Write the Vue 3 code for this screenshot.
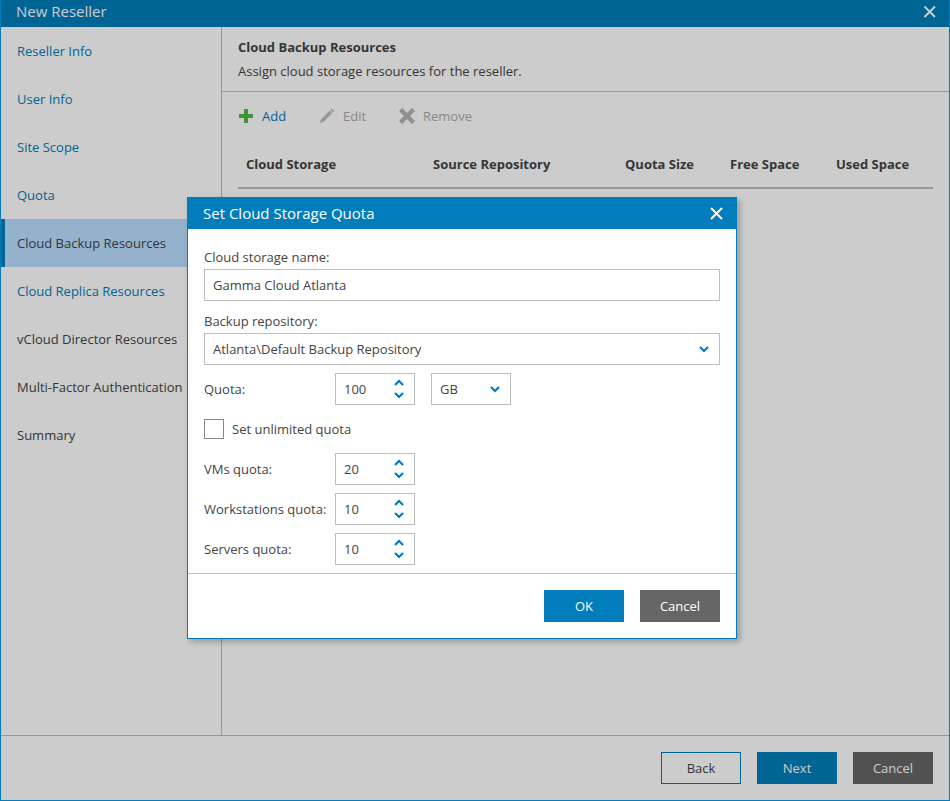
<script setup>
const steps = ['Reseller Info','User Info','Site Scope','Quota','Cloud Backup Resources','Cloud Replica Resources','vCloud Director Resources','Multi-Factor Authentication','Summary']
const active = 4
const dark = new Set([4,6,7,8])
const cols = [
  { t:'Cloud Storage', w:187 }, { t:'Source Repository', w:192 }, { t:'Quota Size', w:105 }, { t:'Free Space', w:106 }, { t:'Used Space', w:97 }
]
const counts = [ ['VMs quota:','20'], ['Workstations quota:','10'], ['Servers quota:','10'] ]
</script>

<template>
  <div class="win">
    <header class="win-head">
      <span class="win-title">New Reseller</span>
      <svg class="x" width="14" height="14" viewBox="0 0 14 14"><path d="M2.5 1.5l10.5 10.5M13 1.5L2.5 12" stroke="#fff" stroke-width="2" fill="none"/></svg>
    </header>
    <div class="win-main">
      <nav class="side">
        <div v-for="(s,i) in steps" :key="s" class="step" :class="{ on: i===active, dk: dark.has(i) }">{{ s }}</div>
      </nav>
      <section class="content">
        <div class="intro">
          <div class="intro-title">Cloud Backup Resources</div>
          <div class="intro-sub">Assign cloud storage resources for the reseller.</div>
        </div>
        <div class="tools">
          <span class="tool t-add">
            <svg width="14" height="14" viewBox="0 0 14 14"><path d="M5 0h4v5h5v4H9v5H5V9H0V5h5z" fill="#4fb848"/></svg>Add
          </span>
          <span class="tool t-edit">
            <svg width="16" height="16" viewBox="0 0 16 16"><path d="M12.7 0.5l2.5 2.5-1.3 1.3-2.5-2.5zM10.7 2.5l2.5 2.5L4 14.3 1 15l.7-3z" fill="#bbb"/></svg>Edit
          </span>
          <span class="tool t-rem">
            <svg width="16" height="16" viewBox="0 0 16 16"><path d="M1.5 1.5l13 13M14.5 1.5l-13 13" stroke="#b5b5b5" stroke-width="4.4" fill="none"/></svg>Remove
          </span>
        </div>
        <div class="thead">
          <span v-for="c in cols" :key="c.t" class="th" :style="{ width: c.w + 'px' }">{{ c.t }}</span>
        </div>
      </section>
    </div>
    <footer class="win-foot">
      <button class="btn b-back">Back</button>
      <button class="btn b-pri">Next</button>
      <button class="btn b-sec">Cancel</button>
    </footer>

    <div class="shade"></div>

    <div class="dlg">
      <header class="dlg-head">
        <span class="dlg-title">Set Cloud Storage Quota</span>
        <svg width="13" height="13" viewBox="0 0 13 13"><path d="M1 1l11 11M12 1L1 12" stroke="#fff" stroke-width="2" fill="none"/></svg>
      </header>
      <div class="dlg-body">
        <label class="lbl l1">Cloud storage name:</label>
        <div class="field">Gamma Cloud Atlanta</div>
        <label class="lbl l2">Backup repository:</label>
        <div class="field sel">
          Atlanta\Default Backup Repository
          <svg class="chev" width="10" height="7" viewBox="0 0 10 7"><path d="M1 1l4 4 4-4" stroke="#007dba" stroke-width="2.2" fill="none"/></svg>
        </div>
        <div class="row r-quota">
          <span class="rl">Quota:</span>
          <div class="spin"><span>100</span>
            <span class="arrows">
              <svg width="10" height="7" viewBox="0 0 10 7"><path d="M1 6l4-4 4 4" stroke="#007dba" stroke-width="2.2" fill="none"/></svg>
              <svg width="10" height="7" viewBox="0 0 10 7"><path d="M1 1l4 4 4-4" stroke="#007dba" stroke-width="2.2" fill="none"/></svg>
            </span>
          </div>
          <div class="unit">GB
            <svg width="10" height="7" viewBox="0 0 10 7"><path d="M1 1l4 4 4-4" stroke="#007dba" stroke-width="2.2" fill="none"/></svg>
          </div>
        </div>
        <div class="check"><span class="box"></span>Set unlimited quota</div>
        <div v-for="c in counts" :key="c[0]" class="row r-count">
          <span class="rl">{{ c[0] }}</span>
          <div class="spin"><span>{{ c[1] }}</span>
            <span class="arrows">
              <svg width="10" height="7" viewBox="0 0 10 7"><path d="M1 6l4-4 4 4" stroke="#007dba" stroke-width="2.2" fill="none"/></svg>
              <svg width="10" height="7" viewBox="0 0 10 7"><path d="M1 1l4 4 4-4" stroke="#007dba" stroke-width="2.2" fill="none"/></svg>
            </span>
          </div>
        </div>
      </div>
      <footer class="dlg-foot">
        <button class="btn d-ok">OK</button>
        <button class="btn d-cancel">Cancel</button>
      </footer>
    </div>
  </div>
</template>

<style>
html, body { margin: 0; padding: 0; background: #fff; }
</style>

<style scoped>
.win {
  position: relative; width: 950px; height: 801px; box-sizing: border-box; overflow: hidden;
  display: flex; flex-direction: column; background: #fff;
  border: 1px solid #007dba; border-top: 0;
  font: 13px/18px "Open Sans", sans-serif; color: #444;
}
.win-head {
  height: 27px; flex: none; margin: 0 -1px; background: #007dba; color: #fff;
  display: flex; align-items: center; justify-content: space-between; padding: 0 14px 4px 16px; box-sizing: border-box;
}
.win-title { font-size: 15px; margin-top: -2px; }
.x { margin-top: 1px; }
.win-main { flex: 1; display: flex; min-height: 0; }
.side { width: 220px; flex: none; border-right: 1px solid #bdbdbd; }
.step { height: 48px; line-height: 48px; padding-left: 16px; color: #007dba; box-sizing: border-box; white-space: nowrap; }
.step.dk { color: #444; }
.step.on { background: #b9dfff; border-left: 4px solid #007dba; padding-left: 12px; }
.content { flex: 1; min-width: 0; }
.intro { height: 65px; box-sizing: border-box; padding: 11px 16px 0; border-bottom: 1px solid #bdbdbd; }
.intro-title { font-weight: 700; line-height: 18px; }
.intro-sub { margin-top: 6px; }
.tools { display: flex; align-items: center; height: 48px; padding-left: 17px; }
.tool { display: inline-flex; align-items: center; gap: 9px; }
.t-add { color: #007dba; width: 80px; }
.t-edit { color: #aaa; width: 80px; gap: 8px; }
.t-rem { color: #aaa; gap: 8px; }
.thead { margin: 0 16px; height: 49px; box-sizing: border-box; border-bottom: 2px solid #bdbdbd; display: flex; align-items: center; padding: 1px 0 0 8px; }
.th { font-weight: 700; flex: none; white-space: nowrap; }
.win-foot {
  height: 65px; flex: none; box-sizing: border-box; border-top: 1px solid #bdbdbd;
  display: flex; justify-content: flex-end; gap: 16px; padding: 16px 16px 0 0;
}
.btn { width: 80px; height: 32px; box-sizing: border-box; font: 13px "Open Sans", sans-serif; border: 0; padding: 0; }
.b-back { background: #fff; border: 1px solid #007dba; color: #444; }
.b-pri { background: #007dba; color: #fff; }
.b-sec { background: #666; color: #fff; }
.shade { position: absolute; inset: 0 -1px -1px -1px; background: rgba(0,0,0,.2); }
.dlg {
  position: absolute; left: 186px; top: 197px; width: 550px; height: 442px; box-sizing: border-box;
  background: #fff; border: 1px solid #007dba; box-shadow: 3px 3px 6px rgba(0,0,0,.25);
  display: flex; flex-direction: column;
}
.dlg-head {
  height: 31px; flex: none; margin: -1px -1px 0; padding: 1px 14px 0 16px; background: #007dba; color: #fff; font-size: 15px;
  display: flex; align-items: center; justify-content: space-between;
}
.dlg-title { margin-top: -2px; }
.dlg-body { flex: 1; padding: 0 16px; }
.lbl { display: block; line-height: 18px; }
.l1 { margin-top: 19px; }
.l2 { margin-top: 11px; }
.field {
  margin-top: 3px; height: 32px; box-sizing: border-box; border: 1px solid #bdbdbd; padding: 0 8px;
  display: flex; align-items: center; justify-content: space-between; line-height: 30px;
}
.sel { padding-right: 10px; }
.row { display: flex; align-items: center; }
.rl { width: 131px; flex: none; white-space: nowrap; }
.r-quota { margin-top: 8px; gap: 16px; }
.r-quota .rl { width: 115px; }
.r-count { margin-top: 8px; }
.check + .r-count { margin-top: 14px; }
.spin {
  width: 80px; height: 32px; box-sizing: border-box; border: 1px solid #bdbdbd; padding: 0 10px 0 8px;
  display: flex; align-items: center; justify-content: space-between;
}
.arrows { display: flex; flex-direction: column; gap: 6px; margin-top: -1px; }
.arrows svg { display: block; }
.unit {
  width: 80px; height: 32px; box-sizing: border-box; border: 1px solid #bdbdbd; padding: 0 10px 0 8px;
  display: flex; align-items: center; justify-content: space-between;
}
.check { display: flex; align-items: center; gap: 8px; margin-top: 14px; height: 20px; }
.box { width: 20px; height: 20px; box-sizing: border-box; border: 1px solid #888; }
.dlg-foot {
  height: 65px; flex: none; box-sizing: border-box; border-top: 1px solid #bdbdbd;
  display: flex; justify-content: flex-end; gap: 16px; padding: 16px 16px 0 0;
}
.d-ok { background: #007dba; color: #fff; }
.d-cancel { background: #666; color: #fff; }
</style>
